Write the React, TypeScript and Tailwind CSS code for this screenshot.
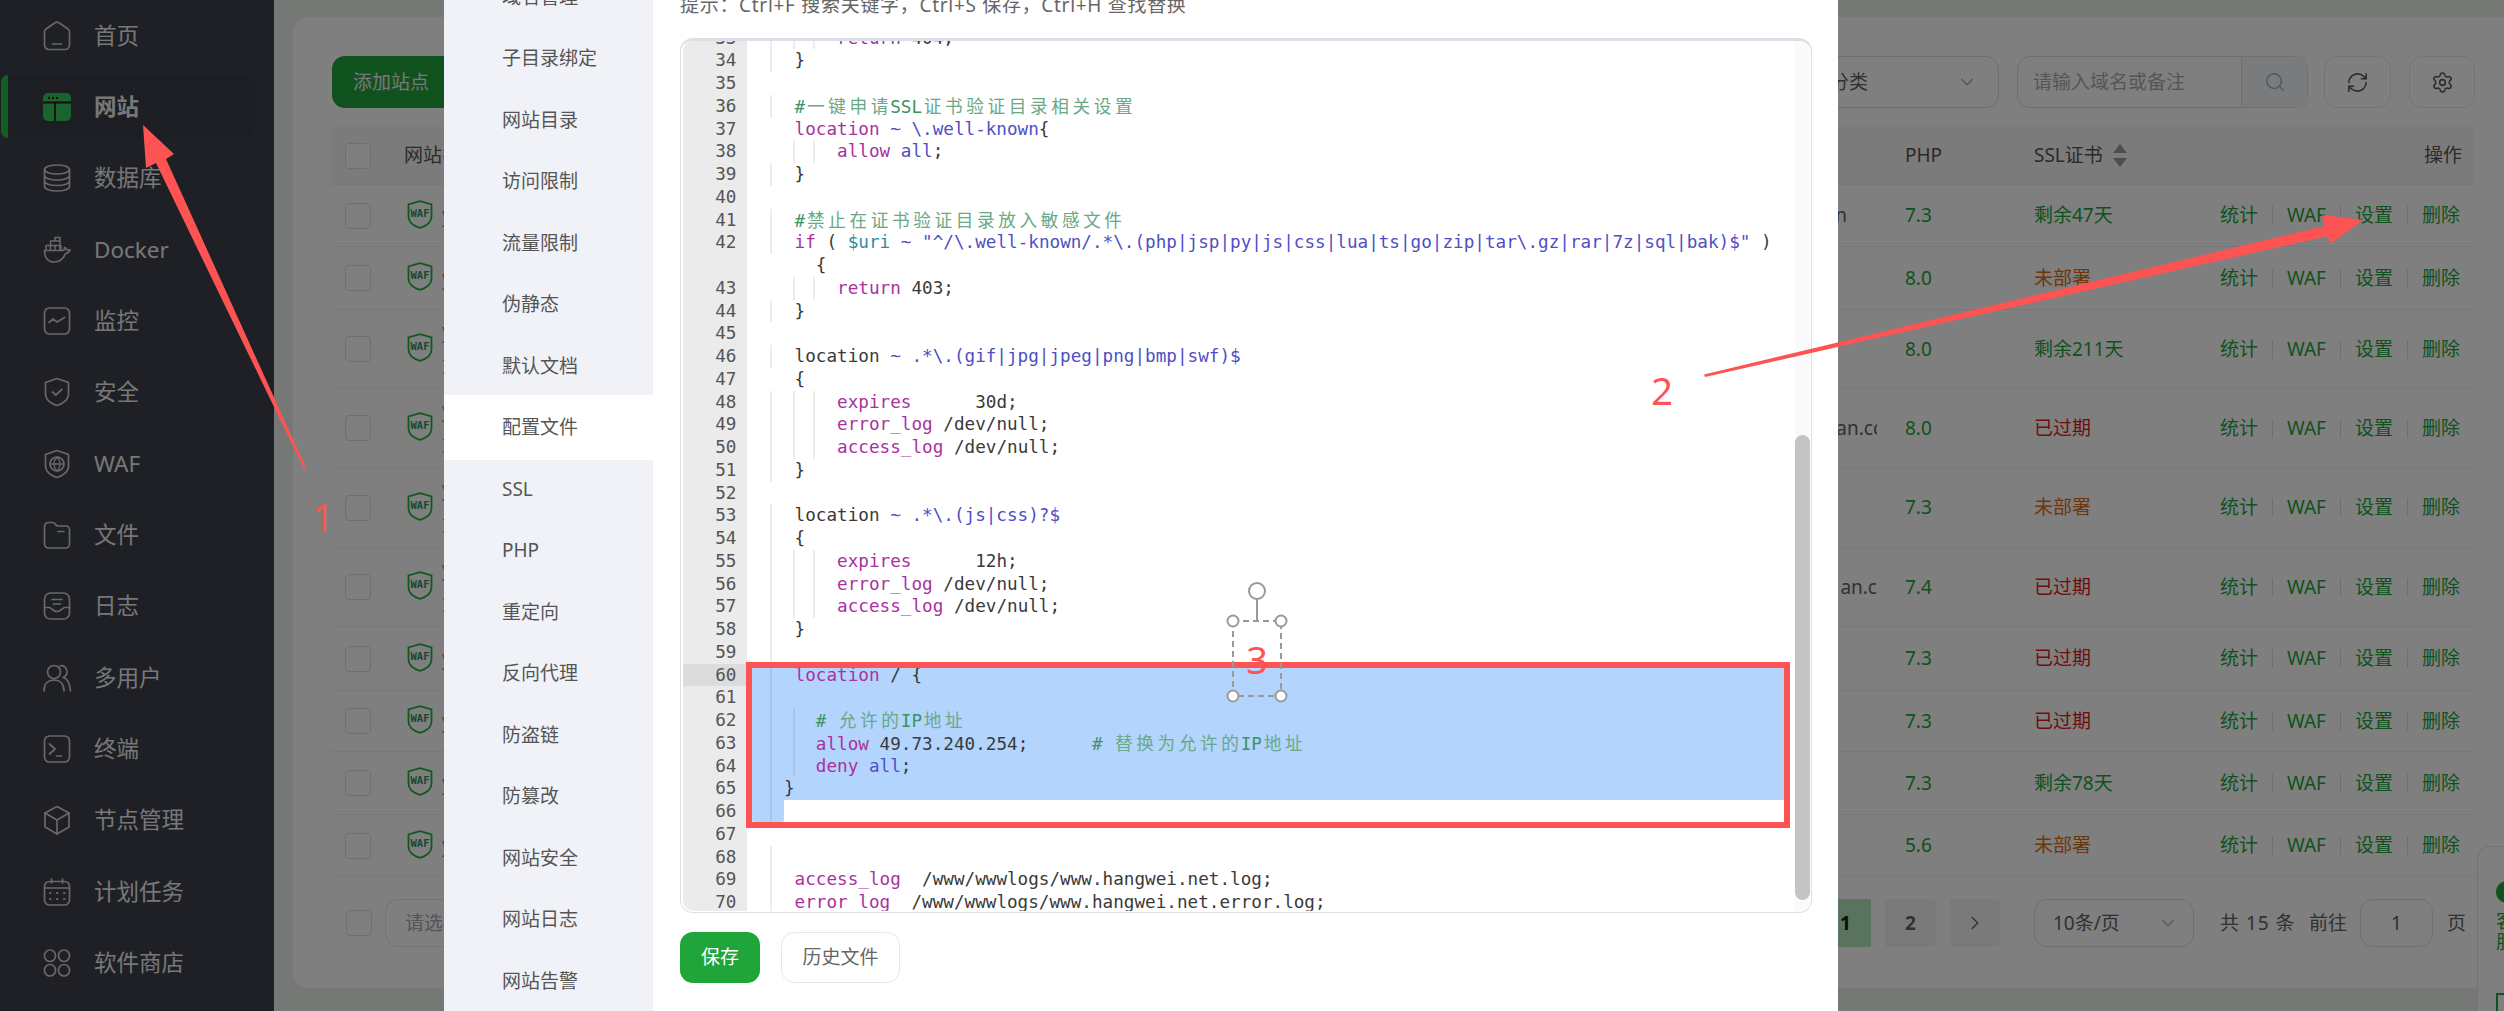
import { ChevronDown, ChevronRight, RefreshCw, Search, Settings } from 'lucide-react'
import type { ReactNode } from 'react'

const iconProps = { width: 30, height: 30, viewBox: '0 0 30 30', fill: 'none', stroke: 'currentColor', strokeWidth: 1.7, strokeLinecap: 'round' as const, strokeLinejoin: 'round' as const }

const navIcons: Record<string, ReactNode> = {
  home: <svg {...iconProps}><path d="M13 1.8a3.5 3.5 0 0 1 4 0l9 6.2a3 3 0 0 1 1.5 2.6V24a4.5 4.5 0 0 1-4.500 4.500H7A4.500 4.500 0 0 1 2.500 24V10.600A3 3 0 0 1 4 8z" /><path d="M10.500 23h9" /></svg>,
  site: (
    <svg width={30} height={30} viewBox="0 0 30 30">
      <rect x="1" y="1" width="28" height="28" rx="5" fill="#36c65a" />
      <path d="M1 10.500h28M13 10.500V29" stroke="#1e2025" strokeWidth="1.800" />
      <path d="M6 6h2M10 6h2M14 6h2" stroke="#1e2025" strokeWidth="1.800" />
    </svg>
  ),
  db: <svg {...iconProps}><ellipse cx="15" cy="6.500" rx="12.500" ry="4.500" /><path d="M2.500 6.500v17c0 2.500 5.600 4.500 12.500 4.500s12.500-2 12.500-4.500v-17M2.500 12.500c0 2.500 5.600 4.500 12.500 4.500s12.500-2 12.500-4.500M2.500 18c0 2.500 5.600 4.500 12.500 4.500s12.500-2 12.500-4.500" /></svg>,
  docker: <svg {...iconProps}><path d="M2.500 15.500h18.500c1 0 1.500-1.500 1.500-3 1.500 0 2 2 2.500 2.500 1 0 2-.2 3-.2-.8 2.800-2.500 3.500-4.500 3.800-2 5-6 8.400-11.500 8.400-6.500 0-9.500-5-9.500-11.500z" /><path d="M4 15V10.500h15V15M8.500 10.500V15M13 10.500V15M8.500 10.500V6h9.500v9M13 6V2.500h5V6" strokeWidth="1.500" /></svg>,
  monitor: <svg {...iconProps}><rect x="2.500" y="2" width="25" height="26" rx="5" /><path d="M7 16.500l4-3.500 4 3 7.500-4.500" /></svg>,
  shield: <svg {...iconProps}><path d="M15 1.500l11.500 4V17c0 6-6 10-11.500 11.500C9.500 27 3.500 23 3.500 17V5.500z" /><path d="M10.500 15l3.300 3 6-5.500" /></svg>,
  waf: <svg {...iconProps}><path d="M15 1.500l11.500 4V17c0 6-6 10-11.500 11.500C9.500 27 3.500 23 3.500 17V5.500z" /><circle cx="15" cy="15" r="7" /><path d="M8 15h14M15 8c-4 4-4 10 0 14M15 8c4 4 4 10 0 14" strokeWidth="1.300" /></svg>,
  folder: <svg {...iconProps}><path d="M2.500 6.500a4 4 0 0 1 4-4h4.500c2 0 2.500 3.500 5 3.500h7.500a4 4 0 0 1 4 4v14a4 4 0 0 1-4 4H6.500a4 4 0 0 1-4-4z" /><path d="M16 11.500h6" /></svg>,
  log: <svg {...iconProps}><rect x="2.500" y="2" width="25" height="26" rx="6" /><path d="M2.500 16.500h5c2 0 3 4 7.500 4s5.500-4 7.500-4h5M10 8.500h10M11.500 13h7" /></svg>,
  users: <svg {...iconProps}><circle cx="12" cy="9" r="6.500" /><path d="M2 28c0-7 4-11 10-11s10 4 10 11M18 3c3-1 7 1 7 5.500 0 3-1.500 5-4 6 4 1 7 6 7.500 13.500" /></svg>,
  terminal: <svg {...iconProps}><rect x="2.500" y="2" width="25" height="26" rx="5" /><path d="M7.500 10l5.500 5-5.500 5M14.500 22h5" /></svg>,
  box: <svg {...iconProps}><path d="M15 1.500l12 6.500v14l-12 7-12-7V8z" /><path d="M3 8l12 7 12-7M15 15v14" /></svg>,
  calendar: <svg {...iconProps}><rect x="2.500" y="4.500" width="25" height="23.500" rx="5" /><path d="M2.500 11h25M9.500 2v4M20.500 2v4" /><path d="M8 16h.5M15 16h.5M22 16h.5M8 22h.5M15 22h.5M22 22h.5" strokeWidth="2" /></svg>,
  apps: <svg {...iconProps}><rect x="2.500" y="2" width="11" height="11.500" rx="5.500" /><rect x="16.500" y="2" width="11" height="11.500" rx="5.500" /><rect x="2.500" y="16.500" width="11" height="11.500" rx="5.500" /><rect x="16.500" y="16.500" width="11" height="11.500" rx="5.500" /></svg>,
}

const navItems = [
  { key: 'home', label: '首页' },
  { key: 'site', label: '网站', active: true },
  { key: 'db', label: '数据库' },
  { key: 'docker', label: 'Docker' },
  { key: 'monitor', label: '监控' },
  { key: 'shield', label: '安全' },
  { key: 'waf', label: 'WAF' },
  { key: 'folder', label: '文件' },
  { key: 'log', label: '日志' },
  { key: 'users', label: '多用户' },
  { key: 'terminal', label: '终端' },
  { key: 'box', label: '节点管理' },
  { key: 'calendar', label: '计划任务' },
  { key: 'apps', label: '软件商店' },
]

const rows = [
  { h: 'h-[62px]', php: '7.3', ssl: '剩余47天', tone: 'text-[#20a53a]', remark: 'n', remarkClass: 'pr-[30px]', two: false },
  { h: 'h-[63px]', php: '8.0', ssl: '未部署', tone: 'text-[#e06a10]', remark: '', remarkClass: '', two: false },
  { h: 'h-[79px]', php: '8.0', ssl: '剩余211天', tone: 'text-[#20a53a]', remark: '', remarkClass: '', two: true },
  { h: 'h-[79px]', php: '8.0', ssl: '已过期', tone: 'text-[#e01818]', remark: 'an.cc', remarkClass: '-mr-[5px]', two: true },
  { h: 'h-[80px]', php: '7.3', ssl: '未部署', tone: 'text-[#e06a10]', remark: '', remarkClass: '', two: true },
  { h: 'h-[79px]', php: '7.4', ssl: '已过期', tone: 'text-[#e01818]', remark: 'an.c', remarkClass: '', two: true },
  { h: 'h-[64px]', php: '7.3', ssl: '已过期', tone: 'text-[#e01818]', remark: '', remarkClass: '', two: false },
  { h: 'h-[61px]', php: '7.3', ssl: '已过期', tone: 'text-[#e01818]', remark: '', remarkClass: '', two: false },
  { h: 'h-[63px]', php: '7.3', ssl: '剩余78天', tone: 'text-[#20a53a]', remark: '', remarkClass: '', two: false },
  { h: 'h-[62px]', php: '5.6', ssl: '未部署', tone: 'text-[#e06a10]', remark: '', remarkClass: '', two: false },
]

const modalTabs = ['域名管理', '子目录绑定', '网站目录', '访问限制', '流量限制', '伪静态', '默认文档', '配置文件', 'SSL', 'PHP', '重定向', '反向代理', '防盗链', '防篡改', '网站安全', '网站日志', '网站告警']

// token colours of the config editor
const KW = 'text-[#a9329f]'
const RE = 'text-[#4f4fc4]'
const PL = 'text-[#3a3a3a]'
const VAR = 'text-[#2f8fa3]'
const CM = 'text-[#3f9160]'
const ZH = "relative left-[1.8px] text-[#6aa886] font-['Noto_Sans_CJK_SC',sans-serif] tracking-[3.6px]"

type Token = [string, string]
interface CodeLine {
  n: number | null
  guides?: number[]
  tokens?: Token[]
  selected?: boolean
  active?: boolean
}

const code: CodeLine[] = [
  { n: 33, guides: [0, 1, 2], tokens: [['        ', PL], ['return', KW], [' 404;', PL]] },
  { n: 34, guides: [0], tokens: [['    }', PL]] },
  { n: 35 },
  { n: 36, guides: [0], tokens: [['    #', CM], ['一键申请', ZH], ['SSL', CM], ['证书验证目录相关设置', ZH]] },
  { n: 37, tokens: [['    ', PL], ['location', KW], [' ~ \\.well-known', RE], ['{', PL]] },
  { n: 38, guides: [1, 2], tokens: [['        ', PL], ['allow', KW], [' ', PL], ['all', RE], [';', PL]] },
  { n: 39, guides: [0], tokens: [['    }', PL]] },
  { n: 40 },
  { n: 41, guides: [0], tokens: [['    #', CM], ['禁止在证书验证目录放入敏感文件', ZH]] },
  { n: 42, guides: [0], tokens: [['    ', PL], ['if', KW], [' ( ', PL], ['$uri', VAR], [' ~ ', RE], ['"^/\\.well-known/.*\\.(php|jsp|py|js|css|lua|ts|go|zip|tar\\.gz|rar|7z|sql|bak)$"', RE], [' )', PL]] },
  { n: null, tokens: [['      {', PL]] },
  { n: 43, guides: [1, 2], tokens: [['        ', PL], ['return', KW], [' 403;', PL]] },
  { n: 44, guides: [0], tokens: [['    }', PL]] },
  { n: 45 },
  { n: 46, guides: [0], tokens: [['    location', PL], [' ~ .*\\.(gif|jpg|jpeg|png|bmp|swf)$', RE]] },
  { n: 47, tokens: [['    {', PL]] },
  { n: 48, guides: [0, 1, 2], tokens: [['        ', PL], ['expires', KW], ['      30d;', PL]] },
  { n: 49, guides: [0, 1, 2], tokens: [['        ', PL], ['error_log', KW], [' /dev/null;', PL]] },
  { n: 50, guides: [0, 1, 2], tokens: [['        ', PL], ['access_log', KW], [' /dev/null;', PL]] },
  { n: 51, guides: [0], tokens: [['    }', PL]] },
  { n: 52 },
  { n: 53, guides: [0], tokens: [['    location', PL], [' ~ .*\\.(js|css)?$', RE]] },
  { n: 54, guides: [0], tokens: [['    {', PL]] },
  { n: 55, guides: [0, 1, 2], tokens: [['        ', PL], ['expires', KW], ['      12h;', PL]] },
  { n: 56, guides: [0, 1, 2], tokens: [['        ', PL], ['error_log', KW], [' /dev/null;', PL]] },
  { n: 57, guides: [0, 1, 2], tokens: [['        ', PL], ['access_log', KW], [' /dev/null;', PL]] },
  { n: 58, guides: [0], tokens: [['    }', PL]] },
  { n: 59, guides: [0] },
  { n: 60, guides: [0], selected: true, active: true, tokens: [['    ', PL], ['location', KW], [' / {', PL]] },
  { n: 61, guides: [0], selected: true },
  { n: 62, guides: [0, 1], selected: true, tokens: [['      # ', CM], ['允许的', ZH], ['IP', CM], ['地址', ZH]] },
  { n: 63, guides: [0, 1], selected: true, tokens: [['      ', PL], ['allow', KW], [' 49.73.240.254;      ', PL], ['# ', CM], ['替换为允许的', ZH], ['IP', CM], ['地址', ZH]] },
  { n: 64, guides: [0, 1], selected: true, tokens: [['      ', PL], ['deny', KW], [' ', PL], ['all', RE], [';', PL]] },
  { n: 65, guides: [0], selected: true, tokens: [['   }', PL]] },
  { n: 66, guides: [0] },
  { n: 67 },
  { n: 68, guides: [0] },
  { n: 69, guides: [0], tokens: [['    ', PL], ['access_log', KW], ['  /www/wwwlogs/www.hangwei.net.log;', PL]] },
  { n: 70, guides: [0], tokens: [['    ', PL], ['error_log', KW], ['  /www/wwwlogs/www.hangwei.net.error.log;', PL]] },
]

const guideLeft = ['left-[18px]', 'left-[41px]', 'left-[61px]']

function WafBadge() {
  return (
    <svg width="26" height="29" viewBox="0 0 26 29" className="-mt-[3px]">
      <path d="M13 1.200l11.500 3.300v12c0 5.500-5.500 9.500-11.500 11.300C7 26 1.500 22 1.500 16.500v-12z" fill="none" stroke="#22b241" strokeWidth="1.800" />
      <text x="13" y="16.500" textAnchor="middle" fontSize="10.500" fontWeight="700" fill="#35905a" fontFamily="'DejaVu Sans Mono', monospace">WAF</text>
    </svg>
  )
}

function Checkbox() {
  return <span className="block h-[26px] w-[26px] rounded-[4px] border-[1.5px] border-[#dcdfe6] bg-white" />
}

function Sidebar() {
  return (
    <aside className="flex h-full w-[274px] shrink-0 flex-col bg-[#3c404a] text-[#eeeeee]">
      {navItems.map((item) => (
        <div key={item.key} className="flex h-[71.33px] shrink-0 items-center">
          {item.active ? (
            <div className="relative ml-[1px] flex h-[63px] w-[254px] items-center rounded-[13px] bg-[#3a3d47] pl-[41px] font-bold">
              <span className="absolute inset-y-0 left-0 w-[7px] rounded-l-[10px] bg-[#26bd44]" />
              {navIcons[item.key]}
              <span className="ml-[22px] text-[22.500px]">{item.label}</span>
            </div>
          ) : (
            <div className="flex items-center pl-[42px]">
              <span className="text-[#d0d0d0]">{navIcons[item.key]}</span>
              <span className="ml-[22px] text-[22.500px]">{item.label}</span>
            </div>
          )}
        </div>
      ))}
    </aside>
  )
}

function SiteTable() {
  return (
    <div className="flex h-[971px] flex-col rounded-l-[16px] bg-white pl-[39px] pr-[29px] pt-[39px] text-[19px]">
      <div className="flex h-[52px] shrink-0 items-stretch justify-between">
        <button className="w-[200px] rounded-[13px] bg-[#20a53a] pl-[21px] text-left text-[#f0f0f0]">添加站点</button>
        <div className="flex items-stretch">
          <div className="flex w-[300px] items-center justify-end rounded-[13px] border-[1.5px] border-[#dcdfe6] pr-[20px] text-[#606266]">
            <span className="mr-[88px]">分类</span>
            <ChevronDown className="h-[22px] w-[22px] text-[#a8abb2]" strokeWidth={1.5} />
          </div>
          <div className="ml-[18px] flex w-[291px] items-stretch rounded-[13px] border-[1.5px] border-[#dcdfe6] text-[#a8abb2]">
            <span className="flex flex-1 items-center border-r-[1.5px] border-[#dcdfe6] pl-[15px]">请输入域名或备注</span>
            <span className="flex w-[65px] items-center justify-center bg-[#f5f7fa]"><Search className="h-[22px] w-[22px]" strokeWidth={1.5} /></span>
          </div>
          <div className="ml-[16px] flex w-[67px] items-center justify-center rounded-[13px] border-[1.5px] border-[#e4e7ed] text-[#555555]"><RefreshCw className="h-[23px] w-[23px]" strokeWidth={1.6} /></div>
          <div className="ml-[18px] flex w-[66px] items-center justify-center rounded-[13px] border-[1.5px] border-[#e4e7ed] text-[#555555]"><Settings className="h-[23px] w-[23px]" strokeWidth={1.6} /></div>
        </div>
      </div>

      <div className="mt-[19px] flex h-[58px] shrink-0 items-center border-b border-[#ebeef5] bg-[#f6f6f6] text-[#555555]">
        <div className="w-[72px] shrink-0 pl-[13px]"><Checkbox /></div>
        <div className="w-[1501px] shrink-0">网站名</div>
        <div className="w-[129px] shrink-0">PHP</div>
        <div className="flex w-[186px] shrink-0 items-center gap-[9px]">
          SSL证书
          <svg width="16" height="25" viewBox="0 0 16 25" fill="#9a9a9a"><path d="M8 1l7 9H1zM8 24l-7-9h14z" /></svg>
        </div>
        <div className="flex-1 pr-[13px] text-right">操作</div>
      </div>

      {rows.map((row, i) => (
        <div key={i} className={`flex shrink-0 items-center border-b border-[#ebeef5] ${row.h}`}>
          <div className="w-[72px] shrink-0 pl-[13px]"><Checkbox /></div>
          <div className="w-[38px] shrink-0 pl-[3px]"><WafBadge /></div>
          <div className="flex w-[1435px] shrink-0 items-center justify-between overflow-hidden">
            <div className="flex flex-col gap-[8px] text-[#b3a01c]">
              <span>y</span>
              {row.two && <span>I</span>}
            </div>
            {row.remark && <span className={`whitespace-nowrap text-[#606266] ${row.remarkClass}`}>{row.remark}</span>}
          </div>
          <div className="ml-[28px] w-[129px] shrink-0 text-[#20a53a]">{row.php}</div>
          <div className={`w-[186px] shrink-0 ${row.tone}`}>{row.ssl}</div>
          <div className="flex shrink-0 items-center text-[#20a53a]">
            <span>统计</span>
            <span className="mx-[14px] h-[19px] w-px bg-[#dcdfe6]" />
            <span>WAF</span>
            <span className="mx-[14px] h-[19px] w-px bg-[#dcdfe6]" />
            <span>设置</span>
            <span className="mx-[14px] h-[19px] w-px bg-[#dcdfe6]" />
            <span>删除</span>
          </div>
        </div>
      ))}

      <div className="mt-[22px] flex h-[48px] shrink-0 items-stretch text-[#606266]">
        <div className="flex items-center pl-[14px]"><Checkbox /></div>
        <div className="ml-[13px] flex w-[300px] items-center rounded-[13px] border-[1.5px] border-[#e4e7ed] pl-[19px] text-[#a8abb2]">请选择批量操作</div>
        <div className="ml-auto flex items-stretch pr-[9px]">
          <span className="flex w-[51px] items-center justify-center rounded-[2px] bg-[#b4e6be] font-bold text-[#1a1a1a]">1</span>
          <span className="ml-[14px] flex w-[51px] items-center justify-center rounded-[3px] bg-[#f4f4f5] font-bold">2</span>
          <span className="ml-[14px] flex w-[50px] items-center justify-center rounded-[3px] bg-[#f4f4f5]"><ChevronRight className="h-[22px] w-[22px]" strokeWidth={1.5} /></span>
          <div className="ml-[34px] flex w-[160px] items-center justify-between rounded-[13px] border-[1.5px] border-[#dcdfe6] pl-[18px] pr-[14px]">
            10条/页
            <ChevronDown className="h-[22px] w-[22px] text-[#a8abb2]" strokeWidth={1.5} />
          </div>
          <span className="ml-[26px] flex w-[127px] items-center justify-between">
            <span className="tracking-[1px]">共 15 条</span>
            <span>前往</span>
          </span>
          <span className="ml-[13px] flex w-[73px] items-center justify-center rounded-[13px] border-[1.5px] border-[#dcdfe6]">1</span>
          <span className="ml-[14px] flex items-center">页</span>
        </div>
      </div>
    </div>
  )
}

function CodeEditor() {
  return (
    <div className="h-[875px] w-[1132px] rounded-[13px] border-[1.5px] border-t-[3px] border-[#dcdfe6] p-[1.5px] pt-0">
      <div className="flex h-full overflow-hidden rounded-[11px] font-['DejaVu_Sans_Mono','Noto_Sans_CJK_SC',monospace] text-[17.650px] leading-[22.75px]">
        <div className="min-w-0 flex-1 overflow-hidden bg-[linear-gradient(to_right,#ebebeb_64px,#ffffff_64px)]">
          <div className="-mt-[14.500px]">
            {code.map((line, i) => (
              <div key={i} className="flex h-[22.75px]">
                <div className={`w-[64px] shrink-0 pr-[10px] text-right text-[#555555] ${line.active ? 'bg-[#dcdcdc]' : ''}`}>{line.n}</div>
                <div className={`relative ml-[5.600px] mr-[5px] min-w-0 flex-1 whitespace-pre ${line.selected ? 'bg-[#b3d4fd]' : ''}`}>
                  {line.n === 66 && <span className="absolute inset-y-0 left-0 w-[32px] rounded-b-[4px] bg-[#b3d4fd]" />}
                  {(line.guides ?? []).map((g) => (
                    <span key={g} className={`absolute inset-y-0 w-[2px] bg-[#00000012] ${guideLeft[g]}`} />
                  ))}
                  <span className="relative">
                    {(line.tokens ?? []).map(([text, cls], j) => (
                      <span key={j} className={cls}>{text}</span>
                    ))}
                  </span>
                </div>
              </div>
            ))}
          </div>
        </div>
        <div className="w-[15px] shrink-0 bg-[#fafafa]">
          <div className="mt-[394px] h-[465px] rounded-full bg-[#c4c4c4]" />
        </div>
      </div>
    </div>
  )
}

function SiteModal() {
  return (
    <div className="absolute left-[444px] top-0 flex h-[1011px] w-[1394px] overflow-hidden bg-white text-[19px] text-[#555555]">
      <div className="w-[209px] shrink-0 bg-[#f0f2f7]">
        <div className="-mt-[34px]">
          {modalTabs.map((tab) => (
            <div key={tab} className={tab === '配置文件' ? '-my-[2px] relative flex h-[65.500px] items-center bg-white pl-[58px]' : 'flex h-[61.500px] items-center pl-[58px]'}>{tab}</div>
          ))}
        </div>
      </div>
      <div className="flex min-w-0 flex-1 flex-col pl-[27px]">
        <div className="-mt-[9px] h-[47px] shrink-0 whitespace-pre leading-[28px] tracking-[0.7px] text-[#666666]">提示：Ctrl+F 搜索关键字，Ctrl+S 保存，Ctrl+H 查找替换</div>
        <CodeEditor />
        <div className="mt-[19px] flex h-[51px] gap-[21px]">
          <button className="w-[80px] rounded-[13px] bg-[#20a53a] text-white">保存</button>
          <button className="w-[119px] rounded-[13px] border-[1.5px] border-[#e4e7ed] bg-white text-[#666666]">历史文件</button>
        </div>
      </div>
    </div>
  )
}

function Annotations() {
  return (
    <>
      <svg className="pointer-events-none absolute inset-0" width="2504" height="1011" viewBox="0 0 2504 1011">
        <polygon points="143,125 174,154 166,159 306,468 304,469 156,163 146,168" fill="#fd5353" />
        <polygon points="1704,374.500 2325,226 2322,215 2363,220 2330,244 2328,236 1705,377" fill="#fd5353" />
        <rect x="749" y="665" width="1038" height="160" fill="none" stroke="#fd5353" strokeWidth="6" />
        <g stroke="#999999" fill="#ffffff" strokeWidth="2">
          <rect x="1233" y="621" width="48" height="75" fill="none" strokeDasharray="6 4" />
          <path d="M1257 599V621" fill="none" />
          <circle cx="1257" cy="591" r="8" />
          <circle cx="1233" cy="621" r="5.500" />
          <circle cx="1281" cy="621" r="5.500" />
          <circle cx="1233" cy="696" r="5.500" />
          <circle cx="1281" cy="696" r="5.500" />
        </g>
      </svg>
      <span className="absolute left-[323px] top-[516px] -translate-x-1/2 -translate-y-1/2 text-[38px] leading-none text-[#fd5353]">1</span>
      <span className="absolute left-[1662px] top-[390px] -translate-x-1/2 -translate-y-1/2 text-[38px] leading-none text-[#fd5353]">2</span>
      <span className="absolute left-[1257px] top-[659px] -translate-x-1/2 -translate-y-1/2 text-[38px] leading-none text-[#fd5353]">3</span>
    </>
  )
}

export default function App() {
  return (
    <div className="relative flex h-[1011px] w-[2504px] overflow-hidden bg-[#ecf0ec] font-['Noto_Sans','Noto_Sans_CJK_SC',sans-serif]">
      <Sidebar />
      <main className="min-w-0 flex-1 pl-[19px] pt-[17px]">
        <SiteTable />
      </main>

      {/* floating support tab */}
      <div className="absolute bottom-0 right-0 top-[846px] w-[27px] rounded-tl-[13px] border-l border-t border-[#e4e7ed] bg-white pl-[18px] pt-[34px] text-[19px] leading-[21px] text-[#20a53a]">
        <div className="h-[22px] w-[22px] rounded-full bg-[#20a53a]" />
        <div className="mt-[8px] w-[20px]">客服</div>
        <div className="mt-[40px] h-[22px] w-[22px] border-2 border-[#20a53a]" />
      </div>

      {/* dialog mask */}
      <div className="absolute inset-0 bg-black/50" />
      <SiteModal />
      <Annotations />
    </div>
  )
}
